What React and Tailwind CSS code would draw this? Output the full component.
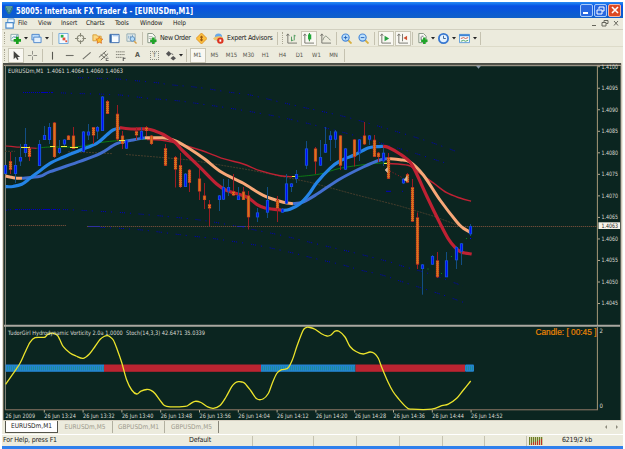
import React from 'react';

// [x, high, low, body top, body bottom, direction]
const candles = [
  [5.7, 165, 174, 165, 174, 'up'],
  [10.4, 152, 174, 161, 170, 'down'],
  [15.4, 157, 183, 165, 174, 'up'],
  [20.3, 144, 166, 157, 161.5, 'up'],
  [25.2, 128, 157, 144, 153, 'up'],
  [29.8, 146, 161, 148, 157, 'down'],
  [39.7, 140, 166, 144, 166, 'up'],
  [44.5, 126, 140, 135, 140, 'up'],
  [49.5, 123, 144, 127, 140, 'up'],
  [54.3, 122, 158, 122.5, 157, 'down'],
  [59, 140, 154, 148, 153, 'up'],
  [64, 139, 146, 139.5, 144.5, 'up'],
  [68.9, 135, 140, 135.5, 140, 'down'],
  [73.6, 127, 149, 135.5, 149, 'down'],
  [83.4, 131, 152, 131.5, 152, 'up'],
  [88.4, 124, 140, 131.5, 135.5, 'up'],
  [93, 127, 144, 127, 135.5, 'down'],
  [97.8, 126, 139, 127, 131.5, 'up'],
  [102.6, 96, 131, 96.5, 131, 'up'],
  [107.5, 100, 114, 101, 114, 'down'],
  [117.2, 105, 141, 113.7, 139.5, 'down'],
  [122, 131, 149, 135.5, 144, 'down'],
  [126.7, 139, 149, 140, 148.7, 'up'],
  [136.5, 127, 140, 131, 135.5, 'down'],
  [141.5, 127, 140, 131, 139.5, 'up'],
  [146.3, 126, 136, 127, 131, 'down'],
  [151.2, 135, 145, 135.5, 144, 'down'],
  [165.4, 144, 166, 148, 165.7, 'down'],
  [175.4, 156, 187.5, 157, 169.6, 'down'],
  [180.2, 153, 188, 165, 187, 'down'],
  [185, 173, 187, 173.7, 187, 'up'],
  [189.8, 169, 192, 169.7, 183, 'down'],
  [199.4, 169, 200, 178.4, 191.6, 'down'],
  [204.4, 183, 209, 195.4, 200, 'down'],
  [209.4, 200, 226, 204, 208.6, 'down'],
  [219, 195, 211, 195.4, 200, 'up'],
  [223.7, 179, 200, 187, 199.7, 'up'],
  [228.6, 179, 196, 187, 191.4, 'up'],
  [233.4, 174, 196, 191, 195.6, 'down'],
  [238.4, 187, 200, 195.4, 200, 'up'],
  [243.3, 187, 200, 191.4, 200, 'down'],
  [248, 191, 229.5, 195.4, 217.4, 'down'],
  [257.6, 208, 222, 212.4, 217.4, 'up'],
  [267.4, 187, 218, 200, 212.7, 'up'],
  [277.4, 196, 222, 199.7, 208.7, 'down'],
  [282.3, 208, 213, 208.7, 212.7, 'up'],
  [286.7, 174, 204, 183.4, 203.7, 'up'],
  [291.5, 183, 192, 183.4, 187, 'up'],
  [296.4, 170, 183, 174, 179, 'up'],
  [306.4, 141, 169, 148.4, 165.7, 'up'],
  [315.4, 147, 174, 148.4, 161.7, 'down'],
  [320.5, 140, 166, 157, 165.7, 'up'],
  [325.4, 127, 153, 144, 152.7, 'up'],
  [330.4, 131, 161, 135.4, 140, 'up'],
  [335.4, 130, 148, 131.4, 139.7, 'up'],
  [340.2, 135, 170, 135.4, 165.7, 'down'],
  [345, 148, 170, 148.4, 169.7, 'up'],
  [354.6, 139, 166.5, 139.4, 157, 'down'],
  [359.6, 139, 161, 139.4, 152.7, 'up'],
  [364.4, 122, 145, 135.4, 144.4, 'down'],
  [369.3, 135, 145, 135.4, 139.7, 'up'],
  [374, 135, 157, 139.7, 157, 'down'],
  [378.8, 152, 162, 152.7, 157, 'down'],
  [383.5, 148, 166, 152.7, 161.4, 'up'],
  [388.4, 153, 179, 157, 178.7, 'down'],
  [403, 178, 184, 178.7, 183.4, 'up'],
  [407.7, 173, 183, 174, 182.7, 'down'],
  [412.6, 179, 222, 187, 221.7, 'down'],
  [417.4, 212.5, 269, 217.3, 264.7, 'down'],
  [422.4, 264, 294.7, 264.4, 269, 'up'],
  [432.4, 255, 265, 256, 264.7, 'up'],
  [437, 252, 278, 260.3, 277.3, 'down'],
  [446.5, 252, 277, 260.3, 277.3, 'up'],
  [456.5, 246, 269, 247, 260.3, 'up'],
  [461.4, 243, 265, 243.3, 251.7, 'up'],
  [470.6, 224, 236, 226, 234.3, 'up'],
];

const BLUE = '#2484e6';
const INDIGO = '#426fce';
const RED = '#bf2133';
const PEACH = '#f8a878';

const averages = [
  // long average
  [RED, 1.2, '5.7,146 15,146.8 22,147.3 36.7,148.3'],
  ['#0c7a14', 1, '36.7,148.3 50,147 78,146.7 100,142.6 120,140.5 147,139.3'],
  [RED, 1.4, '147,139.5 160,140 173,142.3 200,150 223.3,158.7 243.3,164 260,170.7 280,175.7 292,176.7'],
  ['#0c7a14', 1, '296,176.7 310,175.4 323.3,173.3 340,168.3 366.7,164.3 387,162.7'],
  [RED, 1.5, '388,163.5 408,165.3 416.7,171 433,182.7 446.7,192.7 460,198 471,201.2'],
  // slow average
  [PEACH, 3, '5.7,176 10,177 15,178 22,178.3'],
  [INDIGO, 3, '22,178.3 40,176.3 50,171.7 80,161.3 100,153.7 116.7,143.7 133,140 145,137.7'],
  [PEACH, 3, '145,137.7 160,137.7 167,138.2 176.7,141.3 190,149 205,159.3 221.7,172.3 243.3,183.3 263.3,195.3 283.3,202.3 293,203.7'],
  [INDIGO, 3, '293,203.7 303,202 316.7,194.3 340,179 363.3,167 380,160 388,158.7'],
  [PEACH, 3, '388,158.7 400,159.7 410,162 423.3,175 440,200 456.7,221.7 463,228 470,232'],
  // fast average
  [BLUE, 3.2, '5.7,186.7 13,186.5 21.7,184.3 30,178.3 40,170.7 50,163.3 63,157.3 80,150.3 96.7,143.3 106.7,135 113,130 120,128'],
  [RED, 3.2, '120,127.7 133,129 147,129 155,131 163.3,134.5 175,142.3 183,151 200,167.3 216.7,184 226.7,190.5 246.7,197 256.7,204.3 265,208 278,209.7 282,210.3'],
  [BLUE, 3.2, '282,210.6 290,209.3 300,203.7 309,194 316.7,182.7 330,168.3 340,161 355,154.7 368,148 376.7,146.7 383,146.3'],
  [RED, 3.2, '383,146.3 388,147.3 400,154 410,162 416.7,174 426.7,196 440,223.3 448,238.3 455,247.3 461.7,252.3 471.7,254'],
];

const bands = [
  '78,77.8 88,77.8 98,78.3 117,79 142,81.3 157,82.7 170,84.7 197,87.3 230,92.3 250,95 283,102.7 303,107.3 320,111 350,118 387,128.7 427,141 457,151.7',
  '23,92.5 52,92.6 77,93.5 106,94.3 123,95.3 150,98.5 177,100.7 203,104.3 233,108.7 273,115.7 303,122.3 323,127.3 353,135 387,145 410,151.7 447,163.5',
  '6,210.3 15,209.5 60,209.5 80,210.3 120,212.5 147,214.7 177,217.5 200,220 222,223.5 250,229 283,235.7 317,244 350,251.7 390,262 402,266 430,274 463,286',
  '100,227.3 123,228.5 147,230.5 177,234.3 203,237.3 220,239.5 257,245.3 290,252.3 317,259 343,265 360,270 382,275 403,282 443,295 467,303.7',
];

const stoch =
  '5.7,384.3 11.7,375.7 20,363.3 25,352.5 30,342.3 35,337.7 44.3,337.3 47,335 50,333.5 53.5,333.3 57.3,335.2 60,340 63.3,346.7 70,353 76,356 83.3,358.3 90,353.3 95,346.5 100,339.5 104,336.5 107.3,335.7 110,336.8 113.3,340 117,349 121.7,362.5 126.7,380 131.7,390 136.7,394 141,391.2 146.7,389.5 151,390.3 155,393.5 161.7,402.5 166.7,406.3 185,406.3 189.5,404.3 195,401.3 201,402.5 207,406.5 213.3,408.3 220,405.5 226,397 231.7,386.7 235,383 238.3,381.7 242,382 245,383.5 251,391 256.7,398.8 263,399 268.3,393.5 272,384 276.7,373.5 281.7,369.7 287.7,368.3 292.3,360 297,346 301.7,333.5 304,329 306.7,327.3 310,327.5 315,329.3 321,333.5 327,336 331,335 335,331.2 339,331.3 345,337 350,346.5 356,351.5 363.3,354 370,352 374.5,353.5 378.3,358.3 382,368 388,382 393,391.5 398.3,398.5 406.7,407.5 412,409.2 431.7,409.2 441.7,405.7 448.3,404.2 456.7,398.3 463,390.5 470.7,381';

const prices = ['1.4100', '1.4095', '1.4090', '1.4085', '1.4080', '1.4075', '1.4070', '1.4065', '1.4060', '1.4055', '1.4050', '1.4045'];
const times = ['26 Jun 2009', '26 Jun 13:24', '26 Jun 13:32', '26 Jun 13:40', '26 Jun 13:48', '26 Jun 13:56', '26 Jun 14:04', '26 Jun 14:12', '26 Jun 14:20', '26 Jun 14:28', '26 Jun 14:36', '26 Jun 14:44', '26 Jun 14:52'];
const menus = ['File', 'View', 'Insert', 'Charts', 'Tools', 'Window', 'Help'];
const menuWidths = ['w-[20px]', 'w-[23px]', 'w-[25px]', 'w-[29px]', 'w-[25px]', 'w-[33px]', 'w-[20px]'];
const periods = ['M5', 'M15', 'M30', 'H1', 'H4', 'D1', 'W1', 'MN'];

// catmull-rom through a "x,y x,y" list
function smooth(list) {
  const p = list.split(' ').map((s) => s.split(',').map(Number));
  let d = `M${p[0][0]} ${p[0][1]}`;
  for (let i = 0; i < p.length - 1; i++) {
    const a = p[i - 1] || p[i];
    const b = p[i];
    const c = p[i + 1];
    const e = p[i + 2] || c;
    d += ` C${b[0] + (c[0] - a[0]) / 6} ${b[1] + (c[1] - a[1]) / 6} ${c[0] - (e[0] - b[0]) / 6} ${c[1] - (e[1] - b[1]) / 6} ${c[0]} ${c[1]}`;
  }
  return d;
}

function Candle({ data }) {
  const [x, high, low, top, bottom, dir] = data;
  const up = dir === 'up';
  const cx = Math.floor(x) + 0.5;
  return (
    <g>
      <path d={`M${cx} ${high}V${low}`} stroke={up ? '#124e84' : '#9c1c22'} strokeWidth="1" />
      <rect x={cx - 1.6} y={top} width="3.2" height={bottom - top} fill={up ? '#1450d8' : '#bc3024'} />
      <rect x={cx - 0.5} y={top + 0.8} width="1" height={Math.max(bottom - top - 1.6, 1)} fill={up ? '#0008ff' : '#dc7c18'} />
      {!up && <path d={`M${cx} ${top + 1}V${bottom - 0.5}`} stroke="#d4701c" strokeWidth="3" strokeDasharray="1 1" />}
    </g>
  );
}

function Chart() {
  return (
    <svg className="block shrink-0 [font-family:'DejaVu_Sans_Condensed','DejaVu_Sans',sans-serif]" width="621" height="358" viewBox="2 63 621 358" fill="none">
      <rect x="2" y="63" width="621" height="358" fill="#eeebdf" />
      <rect x="3" y="63.3" width="618.5" height="357" fill="#a89c8c" />
      <rect x="3" y="63.3" width="618" height="1.3" fill="#1c2420" />
      <rect x="4" y="66" width="616.5" height="354" fill="#0b2520" />
      <path d="M3.4 64V420" stroke="#5c5a4c" />
      <path d="M5.4 66V410" stroke="#8c8a80" strokeWidth="1" />
      <path d="M5 65.8H597" stroke="#8c8a80" strokeWidth=".8" />
      <path d="M597.4 66V325M597.4 327V410" stroke="#a59878" strokeWidth="1" />
      <path d="M4 325.8H620" stroke="#aaa8a0" strokeWidth="2" />
      <path d="M5 409.8H598" stroke="#927a68" strokeWidth="1" />
      <path d="M476 65.8h5l-2.5 3z" fill="#8898a8" />

      {/* channel bands and long trend */}
      {bands.map((b, i) => (
        <path key={i} d={smooth(b)} stroke="#0000c0" strokeWidth="1" strokeDasharray="1 1 1 1 1 5 1 8" />
      ))}
      <path d="M23 92.5H52M15 209.5H60" stroke="#0000c0" strokeDasharray="1 1" />
      <path d="M386 191.3h5M402 191.3h1" stroke="#0000c0" />
      <path d="M5 151.3h10M68 151.8L86 152.3L113 153.7M126 154.5L153 156.7L190 160L250 170L283 176.7L310 182.3L353 194L400 206L433 216L460 226" stroke="#54432f" strokeWidth=".8" strokeDasharray="2 1" />
      <path d="M9 225.500H66M87 226.500H597" stroke="#6b4a38" strokeWidth="1" strokeDasharray="1.3 .7" />
      <path d="M88 226.500h12M237 226.500h8" stroke="#3030a0" />

      {averages.map(([color, width, list], i) => (
        <path key={i} d={smooth(list)} stroke={color} strokeWidth={width} />
      ))}
      {candles.map((c) => <Candle key={c[0]} data={c} />)}
      <path d="M21 147.5h9M50 146.500h5M61 146.500h6M70 147.500h8M119 140.5h6M292 176.5h3M384 163.5h3" stroke="#f0f040" />
      <path d="M387.5 167.5l-2.5 2.5 2.5 2.5z M404 180l3-4v5z" fill="#d8b8a0" stroke="#d8b8a0" strokeWidth=".6" />
      <path d="M390 171L403 178" stroke="#a81c24" strokeDasharray="1 2" />
      <path d="M427.5 269h1M451 256.5h1M441 273.5h1M466 238.5h1" stroke="#0c8a20" />
      <path d="M470 238.5h1" stroke="#0000ff" />

      {/* oscillator window */}
      <rect x="5.5" y="364.5" width="98.5" height="7.3" fill="#2484d0" />
      <rect x="104" y="364.5" width="157" height="7.3" fill="#bc2431" />
      <rect x="261" y="364.5" width="94.5" height="7.3" fill="#2484d0" />
      <rect x="355.5" y="364.5" width="109.5" height="7.3" fill="#bc2431" />
      <rect x="465" y="364.5" width="9" height="7.3" rx="1" fill="#2484d0" />
      <path d="M7 368.2H104M262 368.2H355M466 368.2h7" stroke="#1c8c9c" strokeWidth="4" strokeDasharray="1 1" />
      <path d={smooth(stoch)} stroke="#ece42c" strokeWidth="1.3" />

      <g fill="#dcdcd4" fontSize="6">
        <text x="8" y="73.2" textLength="115" lengthAdjust="spacingAndGlyphs" xmlSpace="preserve">EURUSDm,M1  1.4061 1.4064 1.4060 1.4063</text>
        <text x="8" y="334.8" textLength="197" lengthAdjust="spacingAndGlyphs" xmlSpace="preserve">TudorGirl Hydrodynamic Vorticity 2.0a 1.0000  Stoch(14,3,3) 42.6471 35.0339</text>
        {prices.map((p, i) => (
          <g key={p}>
            <path d={`M598 ${66.7 + i * 21.53}h2`} stroke="#b0a890" />
            <text x="601.5" y={68.5 + i * 21.53} textLength="16.5" lengthAdjust="spacingAndGlyphs">{p}</text>
          </g>
        ))}
        {times.map((t, i) => (
          <g key={t}>
            {i > 0 && <path d={`M${5.5 + i * 38.8} 410v2.5`} stroke="#b0a890" />}
            <text x={5.5 + i * 38.8} y="417.8" textLength={i === 0 ? 29.5 : 31.5} lengthAdjust="spacingAndGlyphs">{t}</text>
          </g>
        ))}
        <text x="599.5" y="333">2</text>
        <text x="599.5" y="408.3">0</text>
      </g>
      <rect x="598.5" y="222.3" width="21.5" height="6.7" fill="#f6f4ea" />
      <text x="601.5" y="228" fontSize="6" fill="#1c1c1c" textLength="16.5" lengthAdjust="spacingAndGlyphs">1.4063</text>
      <text x="535.5" y="335.3" fontSize="8.500" fill="#e88404" stroke="#e88404" strokeWidth=".2" textLength="61" lengthAdjust="spacingAndGlyphs" className="[font-family:'Liberation_Sans',sans-serif]">Candle: [ 00:45 ]</text>
    </svg>
  );
}

const glyphs = {
  newChart: <><path d="M1 1.5h8v7H1z" fill="#f4f8f8" stroke="#8aa" /><path d="M2 6l2-2 2 1 2-3" stroke="#48a" /><path d="M8 4v8M4 8h8" stroke="#18a020" strokeWidth="3" /></>,
  indicators: <><path d="M2 .5h5l3 3v7H2z" fill="#fbfbf5" stroke="#809080" /><path d="M5 3.500h2M4.500 8V4" stroke="#667" /><path d="M8 5v7M4.500 8.500h7" stroke="#20a428" strokeWidth="2.800" /></>,
  windows: <><path d="M1 1.5h8v6H1z" fill="#bcdcfa" stroke="#4a84cc" /><path d="M3 4.5h8v6H3z" fill="#e4f0fc" stroke="#4a84cc" /></>,
  market: <><path d="M1 .5h10v11H1z" fill="#f4faff" stroke="#68a4dc" /><path d="M3 2h3v3H3z" fill="#28b048" /><path d="M5 5h3v3H5z" fill="#e85038" /><path d="M8 8h2v2H8z" fill="#e85038" /></>,
  target: <><circle cx="6" cy="6" r="3.5" stroke="#888878" strokeWidth="1.2" /><path d="M6 0v4M6 8v4M0 6h4M8 6h4" stroke="#888878" strokeWidth="1.2" /></>,
  folder: <><path d="M1 2h4l1 1.5h4v5H1z" fill="#fcd880" stroke="#d89c38" /><path d="M8 4l1.2 2.4 2.6.3-1.9 1.8.5 2.7L8 10l-2.4 1.2.5-2.7L4.200 6.700l2.600-.3z" fill="#fcc030" stroke="#d86820" strokeWidth=".8" /></>,
  data: <><path d="M1 1.500h10v9H1z" fill="#f8fcff" stroke="#3468ac" /><path d="M2 2v8" stroke="#3468ac" strokeWidth="2" /><path d="M4 3h6" stroke="#8cb8ec" /></>,
  tester: <><path d="M1 1h9v8H1z" fill="#e4ecec" stroke="#90a8b0" /><path d="M3 6V3M5 7V3M7 6V2" stroke="#7ca4c4" /><circle cx="7" cy="6.500" r="2.500" fill="#b4dcfa" stroke="#5888b8" /><path d="M9 9l2.500 2.500" stroke="#d8a048" strokeWidth="1.500" /></>,
  order: <><path d="M2 .5h5l3 3v7H2z" fill="#fbfbf5" stroke="#809080" /><path d="M3 4h4M3 6h4" stroke="#a8b0a8" /><path d="M8 5v7M4.500 8.500h7" stroke="#20a428" strokeWidth="2.800" /></>,
  diamond: <><path d="M6 0l6 6-6 6-6-6z" fill="#fcc040" stroke="#e09424" /><path d="M6 3v6M4.500 4.500h3M4.500 7.500h3" stroke="#9c5810" strokeWidth="1.200" /></>,
  expert: <><circle cx="6" cy="4.500" r="4" fill="#68a8e8" /><path d="M0 6c3-3 8-3 11-1L9 8H2z" fill="#f0c468" /><circle cx="8" cy="8.300" r="3.500" fill="#dc3420" /><path d="M7 7h2v2.500H7z" fill="#fff" /></>,
  bars: <><path d="M2 1v10h10M2 1L.5 3M2 1l1.500 2" stroke="#707068" /><path d="M6 4v5M9 2v6M6 8h2M9 3h1.500" stroke="#489858" /></>,
  candle: <><path d="M2 1v10h10M2 1L.5 3M2 1l1.500 2" stroke="#707068" /><path d="M7 0v9" stroke="#128020" /><path d="M5.500 1.500h3.500v5.500H5.500z" fill="#20a838" /></>,
  line: <><path d="M2 1v10h10M2 1L.5 3M2 1l1.500 2" stroke="#707068" /><path d="M3 8c2-5 3-5 4.500-4S10 7 11.500 8" stroke="#808878" /></>,
  zoomIn: <><path d="M7.500 7.500l4 4" stroke="#d8b040" strokeWidth="2" /><circle cx="5" cy="5" r="3.900" fill="#bce0fc" stroke="#4888d8" strokeWidth="1.300" /><path d="M5 3v4M3 5h4" stroke="#2460b8" /></>,
  zoomOut: <><path d="M7.500 7.500l4 4" stroke="#d8b040" strokeWidth="2" /><circle cx="5" cy="5" r="3.900" fill="#bce0fc" stroke="#4888d8" strokeWidth="1.300" /><path d="M3 5h4" stroke="#2460b8" /></>,
  scroll: <><path d="M2 1v10h10M2 1L.5 3M2 1l1.500 2" stroke="#707068" /><path d="M5 3l5 3-5 3z" fill="#28a040" /></>,
  shift: <><path d="M2 1v10h10M2 1L.5 3M2 1l1.500 2M6 1v8" stroke="#707068" /><path d="M11 3L7 5.500 11 8z" fill="#d05030" /></>,
  clock: <><circle cx="6" cy="6" r="5" fill="#e4f2ff" stroke="#3878d0" strokeWidth="2" /><path d="M6 3v3h2.500" stroke="#386090" /></>,
  template: <><path d="M.5 1.500h11v9H.5z" fill="#f6faff" stroke="#5898d8" /><path d="M.5 2.500h11" stroke="#3c84d4" strokeWidth="2" /><path d="M2 6l3-1 2 1 3-1" stroke="#c85840" /><path d="M2 9l3-1 2 1 3-1" stroke="#48a058" /></>,
  arrow: <path d="M4 1v9l2.200-2L8 11l1.400-.8L8 7.500h3z" fill="#444440" />,
  cross: <path d="M6 1v4M6 7v4M1 6h4M7 6h4" stroke="#888880" />,
  vline: <path d="M6 2v8.500" stroke="#585850" strokeWidth="1.200" />,
  hline: <path d="M2 6h8.500" stroke="#707068" strokeWidth="1.200" />,
  diag: <path d="M2 10L10.500 2.500" stroke="#707068" strokeWidth="1.200" />,
  channel: <><path d="M1 8l8-7M3 11l8-7M3 5l5 4M6 3l4 4" stroke="#606058" /><path d="M9 9h2.500M9 11.500h2.500M9 9v3" stroke="#444" strokeWidth=".8" /></>,
  fib: <><path d="M1 2h10M1 5h10M1 8h7" stroke="#77776c" strokeDasharray="1.500 .5" /><path d="M9 8v4M9 9h2.500" stroke="#444" /></>,
  arrows: <><path d="M1 4l3-3 3 3-3 3z" fill="#555" /><path d="M6 9l3-2.500L12 9l-3 2.500z" fill="#555" /><path d="M7 4l2 1" stroke="#555" /></>,
  mdi: <><path d="M3 1h7v5H3z" fill="#e8f4ff" stroke="#4c8ccc" /><path d="M1 5h8v6H1z" fill="#f6fbff" stroke="#4c8ccc" strokeWidth="1.300" /></>,
};

function Glyph({ name }) {
  return <svg className="size-[11px] shrink-0" viewBox="0 0 12 12" fill="none">{glyphs[name]}</svg>;
}

function Caret() {
  return <svg className="h-[3px] w-[4px] shrink-0" viewBox="0 0 4 3"><path d="M0 0h4L2 2.500z" fill="#222" /></svg>;
}

// One 17px toolbar slot
function Tool({ name, pressed, children }) {
  return (
    <div className="flex h-full w-[17px] shrink-0 items-center justify-center">
      <div className={pressed ? 'flex h-[15px] w-[16px] items-center justify-center border border-[#c9c7b6] bg-[#f9f8f2]' : 'flex items-center justify-center'}>
        {name && <Glyph name={name} />}
        {children}
      </div>
    </div>
  );
}

function Drop({ name }) {
  return (
    <div className="flex w-[21px] shrink-0 items-center gap-[3px] pl-[2px]">
      <Glyph name={name} />
      <Caret />
    </div>
  );
}

function Sep() {
  return <div className="mx-[2px] h-[13px] w-px shrink-0 bg-[#c5c2b0]" />;
}

function Grip() {
  return <div className="mx-[2px] h-[12px] w-[2px] shrink-0 border-l border-dotted border-[#a8a592]" />;
}

export default function App() {
  return (
    <div className="h-[449px] w-[625px] overflow-hidden bg-white pt-[2px] pl-[2px] text-[7px] leading-none text-[#222] [font-family:'DejaVu_Sans_Condensed','DejaVu_Sans',sans-serif]">
      <div className="flex h-[447px] w-[621px] flex-col bg-[#ecebdd]">
        {/* title bar */}
        <div className="flex h-[16px] shrink-0 items-center bg-linear-to-b from-[#2a8cf4] via-[#0a50e4] via-25% to-[#1060c8] pr-[2px] pl-[3px] text-white">
          <svg className="mr-[3px] size-[8px]" viewBox="0 0 8 8"><path d="M0 0h8v3L5 8H3L0 3z" fill="#2c7c8c" /><path d="M1 1h6M2 3h4M3 5h2" stroke="#9cc8b0" strokeWidth=".8" /></svg>
          <svg className="h-[16px] w-[300px] overflow-visible" viewBox="0 0 300 16">
            <text x="0" y="11.500" fontSize="9" fontWeight="600" fill="#fff" textLength="177" lengthAdjust="spacingAndGlyphs" className="[font-family:'DejaVu_Sans_Condensed','DejaVu_Sans',sans-serif]">58005: Interbank FX Trader 4 - [EURUSDm,M1]</text>
          </svg>
          <div className="ml-auto flex gap-[1px]">
            <div className="flex h-[13px] w-[13px] items-end rounded-[2px] border border-[#a8ccfa] bg-[#2868e0] p-[2px]"><i className="h-[2px] w-[5px] bg-white" /></div>
            <div className="flex h-[13px] w-[13px] items-center justify-center rounded-[2px] border border-[#a8ccfa] bg-[#2868e0]">
              <svg className="size-[9px]" viewBox="0 0 9 9" fill="none" stroke="#fff"><path d="M3 3V1h5v4H6M1 4h5v4H1z" /></svg>
            </div>
            <div className="flex h-[13px] w-[13px] items-center justify-center rounded-[2px] border border-[#f4b8a4] bg-[#dc4a24]">
              <svg className="size-[8px]" viewBox="0 0 8 8" stroke="#fff" strokeWidth="1.600"><path d="M1 1l6 6M7 1L1 7" /></svg>
            </div>
          </div>
        </div>

        {/* menu */}
        <div className="flex h-[12px] shrink-0 items-center border-b border-[#d2d0c0] pl-[3px] text-[6.5px] tracking-[-0.1px]">
          <div className="mr-[2px] flex"><Glyph name="mdi" /></div>
          {menus.map((m, i) => <div key={m} className={menuWidths[i]}>{m}</div>)}
          <svg className="mr-[2px] ml-auto h-[9px] w-[32px]" viewBox="0 0 32 9" fill="none" stroke="#66665c">
            <path d="M3 6.500h4M15 3V1.500h4v3h-2M13 3.500h4v3.500h-4zM25 2l4 4.500M29 2l-4 4.500" />
          </svg>
        </div>

        {/* standard toolbar */}
        <div className="flex h-[17px] shrink-0 items-center border-b border-[#dddbc9]">
          <Grip />
          <Drop name="newChart" />
          <Drop name="windows" />
          <Sep />
          <Tool name="market" />
          <Tool name="target" />
          <Tool name="folder" />
          <Tool name="data" />
          <Tool name="tester" />
          <Sep />
          <div className="flex w-[48px] shrink-0 items-center gap-[3px] pl-[1px] whitespace-nowrap tracking-[-0.35px]"><Glyph name="order" />New Order</div>
          <Tool name="diamond" />
          <div className="flex w-[65px] shrink-0 items-center gap-[3px] pl-[3px] whitespace-nowrap tracking-[-0.25px]"><Glyph name="expert" />Expert Advisors</div>
          <Sep />
          <Grip />
          <div className="-ml-[3px] flex h-full items-center">
            <Tool name="bars" />
            <Tool name="candle" pressed />
            <Tool name="line" />
          </div>
          <Sep />
          <div className="-ml-px flex h-full items-center">
            <Tool name="zoomIn" />
            <Tool name="zoomOut" />
          </div>
          <Sep />
          <Tool name="scroll" pressed />
          <Tool name="shift" pressed />
          <div className="-ml-px flex h-full items-center">
            <Sep />
            <Drop name="indicators" />
            <Drop name="clock" />
            <Drop name="template" />
            <Sep />
          </div>
        </div>

        {/* drawing tools and periods */}
        <div className="flex h-[16px] shrink-0 items-center text-[6px] text-[#55554c]">
          <Grip />
          <div className="-ml-px flex h-full items-center">
            <Tool name="arrow" pressed />
            <Tool name="cross" />
          </div>
          <div className="-mx-px"><Sep /></div>
          <Tool name="vline" />
          <Tool name="hline" />
          <Tool name="diag" />
          <Tool name="channel" />
          <Tool name="fib" />
          <Tool><b className="text-[7px]">A</b></Tool>
          <Tool>
            <span className="flex size-[9px] items-center justify-center border border-dotted border-[#8c8c80]">T</span>
          </Tool>
          <Drop name="arrows" />
          <Sep />
          <Tool pressed>M1</Tool>
          {periods.map((p) => <Tool key={p}>{p}</Tool>)}
          <Sep />
        </div>

        <Chart />

        {/* chart tabs */}
        <div className="flex h-[13px] shrink-0 items-start pl-[3px] text-[6.500px] text-[#9c9a8c]">
          <div className="flex h-[12px] w-[53px] items-center justify-center border border-t-0 border-[#55554c] bg-white text-[#222]">EURUSDm,M1</div>
          <div className="flex h-[12px] w-[54px] items-center justify-center">EURUSDm,M5</div>
          <div className="flex h-[12px] w-[53px] items-center justify-center border-x border-[#b2b0a0]">GBPUSDm,M1</div>
          <div className="flex h-[12px] w-[54px] items-center justify-center border-r border-[#88867a]">GBPUSDm,M5</div>
          <svg className="mt-[3px] mr-[3px] ml-auto h-[6px] w-[16px]" viewBox="0 0 16 6" fill="#8c8a7c"><path d="M3 1v4L1 3zM12 1v4l2-2z" /></svg>
        </div>

        {/* status bar */}
        <div className="flex h-[12px] shrink-0 items-center border-t border-white text-[7px]">
          <div className="w-[187px] pl-[1px] tracking-[-0.150px]">For Help, press F1</div>
          <div className="w-[63px] tracking-[-0.150px]">Default</div>
          <div className="h-[10px] w-[61px] border-l border-[#c5c2b0]" />
          <div className="h-[10px] w-[43px] border-l border-[#c5c2b0]" />
          <div className="h-[10px] w-[43px] border-l border-[#c5c2b0]" />
          <div className="h-[10px] w-[43px] border-l border-[#c5c2b0]" />
          <div className="h-[10px] w-[42px] border-l border-[#c5c2b0]" />
          <div className="h-[10px] w-[42px] border-l border-[#c5c2b0]" />
          <div className="flex h-[10px] items-center border-l border-[#c5c2b0] pl-[2px]">
            <svg className="h-[8px] w-[14px]" viewBox="0 0 14 8" shapeRendering="crispEdges">
              <path d="M0 0h14v8H0z" fill="#c8cc9c" />
              <path d="M.5 0v8M2.500 0v8M4.500 0v8M6.500 0v8M8.500 0v8M10.500 0v8M12.500 0v8" stroke="#6c7c28" />
              <path d="M2.500 6v2M4.500 5v3M6.500 5v3M8.500 4v4M10.500 3v5M12.500 2v6" stroke="#c03028" />
            </svg>
          </div>
          <div className="pl-[19px] tracking-[-0.200px] whitespace-nowrap">6219/2 kb</div>
        </div>
        <div className="h-[3px] shrink-0 bg-[#2f80ec]" />
      </div>
    </div>
  );
}
